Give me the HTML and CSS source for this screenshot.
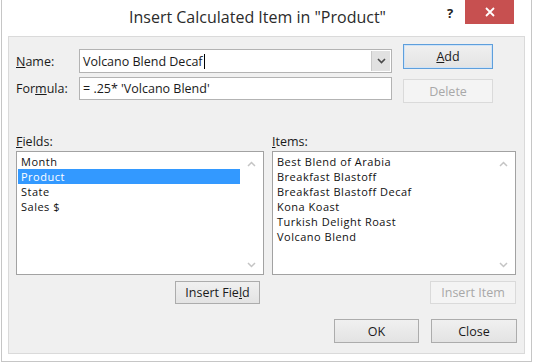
FILE: index.html
```html
<!DOCTYPE html>
<html lang="en">
<head>
    <meta charset="UTF-8">
    <title>Insert Calculated Item</title>
    <link rel="stylesheet" href="styles.css">
</head>
<body>

    <div class="window">
        <div class="titlebar">
            <div class="title">Insert Calculated Item in "Product"</div>
            <div class="controls">
                <span class="help">?</span>
                <span class="close">
                    <svg width="10" height="10" viewBox="0 0 10 10"><path d="M1 1 L9 9 M9 1 L1 9" stroke="#fff" stroke-width="1.8" fill="none"/></svg>
                </span>
            </div>
        </div>

        <div class="panel">
            <div class="top">
                <div class="form">
                    <div class="row">
                        <label><u>N</u>ame:</label>
                        <div class="combo">
                            <span class="value">Volcano Blend Decaf<span class="caret"></span></span>
                            <span class="drop">
                                <svg width="9" height="6" viewBox="0 0 9 6"><path d="M1 1 L4.5 4.5 L8 1" stroke="#4a4a4a" stroke-width="1.6" fill="none"/></svg>
                            </span>
                        </div>
                    </div>
                    <div class="row">
                        <label>For<u>m</u>ula:</label>
                        <div class="textbox">= .25* 'Volcano Blend'</div>
                    </div>
                </div>
                <div class="side-buttons">
                    <button class="btn btn-add default"><u>A</u>dd</button>
                    <button class="btn btn-delete" disabled>Delete</button>
                </div>
            </div>

            <div class="lists">
                <div class="list-col fields-col">
                    <div class="list-label"><u>F</u>ields:</div>
                    <div class="listbox">
                        <ul>
                            <li>Month</li>
                            <li class="selected">Product</li>
                            <li>State</li>
                            <li>Sales $</li>
                        </ul>
                        <div class="scrollbar">
                            <svg width="9" height="6" viewBox="0 0 9 6"><path d="M1 5 L4.5 1.5 L8 5" stroke="#c4c4c4" stroke-width="1.5" fill="none"/></svg>
                            <svg width="9" height="6" viewBox="0 0 9 6"><path d="M1 1 L4.5 4.5 L8 1" stroke="#c4c4c4" stroke-width="1.5" fill="none"/></svg>
                        </div>
                    </div>
                    <div class="list-action">
                        <button class="btn">Insert Fie<u>l</u>d</button>
                    </div>
                </div>

                <div class="list-col items-col">
                    <div class="list-label"><u>I</u>tems:</div>
                    <div class="listbox">
                        <ul>
                            <li>Best Blend of Arabia</li>
                            <li>Breakfast Blastoff</li>
                            <li>Breakfast Blastoff Decaf</li>
                            <li>Kona Koast</li>
                            <li>Turkish Delight Roast</li>
                            <li>Volcano Blend</li>
                        </ul>
                        <div class="scrollbar">
                            <svg width="9" height="6" viewBox="0 0 9 6"><path d="M1 5 L4.5 1.5 L8 5" stroke="#c4c4c4" stroke-width="1.5" fill="none"/></svg>
                            <svg width="9" height="6" viewBox="0 0 9 6"><path d="M1 1 L4.5 4.5 L8 1" stroke="#c4c4c4" stroke-width="1.5" fill="none"/></svg>
                        </div>
                    </div>
                    <div class="list-action">
                        <button class="btn btn-insert-item" disabled>Insert Item</button>
                    </div>
                </div>
            </div>

            <div class="footer">
                <button class="btn btn-ok">OK</button>
                <button class="btn btn-close">Close</button>
            </div>
        </div>
    </div>

</body>
</html>
```

FILE: styles.css
```css
body {
    margin: 0;
    background-color: #ffffff;
    font-family: 'Open Sans', 'Noto Sans', sans-serif;
    font-size: 12.5px;
    color: #1a1a1a;
}

.window {
    width: 531px;
    height: 362px;
    margin-left: 1px;
    padding: 0 6px;
    box-sizing: border-box;
    border: 1px solid #c6c6c6;
    border-top: none;
    background-color: #ffffff;
}

/* Title bar */
.titlebar {
    display: flex;
    height: 36px;
}

.title {
    flex: 1;
    padding-left: 67px;
    padding-top: 6px;
    text-align: center;
    font-size: 16px;
    color: #2b2b2b;
}

.controls {
    display: flex;
    align-items: flex-start;
}

.help {
    width: 20px;
    margin-top: 4px;
    margin-right: 5px;
    text-align: center;
    font-weight: bold;
    font-size: 13px;
    color: #222;
}

.close {
    display: flex;
    align-items: center;
    justify-content: center;
    width: 49px;
    height: 24px;
    background-color: #c75050;
    margin-right: 11px;
}

/* Gray dialog area */
.panel {
    background-color: #f0f0f0;
    border: 1px solid #dadada;
    padding: 7px 7px 10px 7px;
}

.top {
    display: flex;
    align-items: flex-start;
}

.form {
    margin-top: 5px;
    display: flex;
    flex-direction: column;
    gap: 4px;
}

.row {
    display: flex;
    align-items: center;
}

.row label {
    width: 63px;
}

.combo, .textbox {
    width: 313px;
    box-sizing: border-box;
    background: #ffffff;
    border: 1px solid #b3b3b3;
}

.combo {
    display: flex;
    height: 24px;
}

.combo .value {
    flex: 1;
    display: flex;
    align-items: center;
    padding-left: 3px;
}

.caret {
    display: inline-block;
    width: 1px;
    height: 15px;
    margin-left: 1px;
    background: #000;
}

.drop {
    width: 18px;
    margin: 1px;
    display: flex;
    align-items: center;
    justify-content: center;
    background: #e1e1e1;
    border-left: 1px solid #c9c9c9;
}

.textbox {
    height: 23px;
    line-height: 21px;
    padding-left: 3px;
}

.side-buttons {
    margin-left: 11px;
    display: flex;
    flex-direction: column;
    gap: 10px;
}

/* Buttons */
.btn {
    font-family: 'Open Sans', 'Noto Sans', sans-serif;
    font-size: 12.5px;
    color: #1a1a1a;
    background: linear-gradient(#f0f0f0, #e3e3e3);
    border: 1px solid #acacac;
    padding: 0;
    height: 24px;
    width: 85px;
}

.btn.default {
    border-color: #5e9fdc;
    box-shadow: inset 0 0 0 1px #cfe3f7;
}

.btn:disabled {
    background: #f4f4f4;
    border-color: #dadada;
    color: #a8a8a8;
}

.btn-add {
    width: 90px;
    height: 25px;
}

.btn-delete {
    width: 90px;
}

/* Field and item lists */
.lists {
    display: flex;
    gap: 8px;
    margin-top: 31px;
}

.fields-col {
    width: 248px;
}

.items-col {
    width: 244px;
}

.list-label {
    line-height: 15px;
    margin-bottom: 2px;
}

.listbox {
    display: flex;
    height: 124px;
    box-sizing: border-box;
    background: #ffffff;
    border: 1px solid #a2a2a2;
}

.listbox ul {
    flex: 1;
    list-style: none;
    margin: 0;
    padding: 2px 0 0 1px;
}

.listbox li {
    height: 15px;
    line-height: 15px;
    padding-left: 3px;
    font-size: 11px;
    letter-spacing: 0.5px;
    color: #111;
    white-space: nowrap;
}

.listbox li.selected {
    background: #3399ff;
    color: #ffffff;
}

.scrollbar {
    width: 23px;
    display: flex;
    flex-direction: column;
    align-items: center;
    justify-content: space-between;
    padding: 9px 0 6px;
}

.list-action {
    display: flex;
    justify-content: flex-end;
    margin-top: 6px;
}

.fields-col .list-action {
    padding-right: 4px;
}

.list-action .btn {
    height: 23px;
}

.btn-insert-item {
    width: 86px;
}

.footer {
    display: flex;
    justify-content: flex-end;
    gap: 12px;
    margin-top: 15px;
}

.btn-close {
    width: 86px;
}
```
